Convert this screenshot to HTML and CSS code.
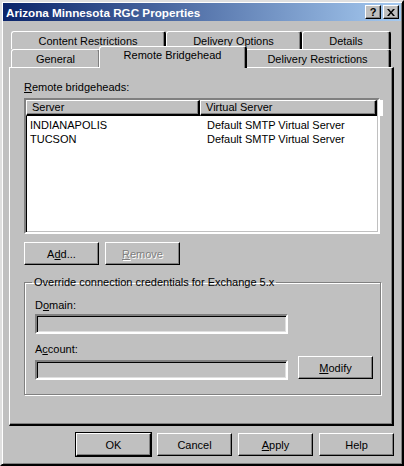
FILE: index.html
```html
<!DOCTYPE html>
<html lang="en">

<head>
    <meta charset="UTF-8">
    <title>Arizona Minnesota RGC Properties</title>
    <link rel="stylesheet" href="styles.css">
</head>

<body>
    <div class="window">
        <div class="titlebar">
            <span class="title">Arizona Minnesota RGC Properties</span>
            <div class="caption-btns">
                <button class="cap-btn help-btn">?</button>
                <button class="cap-btn close-btn">
                    <svg width="8" height="7" viewBox="0 0 8 7">
                        <path d="M0 0h2l2 2.5 2-2.5h2l-3 3.5 3 3.5h-2l-2-2.5-2 2.5h-2l3-3.5z" fill="#000" />
                    </svg>
                </button>
            </div>
        </div>

        <div class="tabs">
            <div class="tab-row top-row">
                <div class="tab w-content">Content Restrictions</div>
                <div class="tab w-options">Delivery Options</div>
                <div class="tab w-details">Details</div>
            </div>
            <div class="tab-row bottom-row">
                <div class="tab w-general">General</div>
                <div class="tab w-remote selected">Remote Bridgehead</div>
                <div class="tab w-restrict">Delivery Restrictions</div>
            </div>
        </div>

        <div class="panel">
            <div class="label"><u>R</u>emote bridgeheads:</div>
            <div class="listview">
                <div class="lv-header">
                    <div class="lv-col col-server">Server</div>
                    <div class="lv-col col-virtual">Virtual Server</div>
                    <div class="lv-col col-rest"></div>
                </div>
                <div class="lv-row">
                    <span class="cell-server">INDIANAPOLIS</span>
                    <span class="cell-virtual">Default SMTP Virtual Server</span>
                </div>
                <div class="lv-row">
                    <span class="cell-server">TUCSON</span>
                    <span class="cell-virtual">Default SMTP Virtual Server</span>
                </div>
            </div>

            <div class="btn-line">
                <button class="btn">A<u>d</u>d...</button>
                <button class="btn disabled"><u>R</u>emove</button>
            </div>

            <fieldset class="group">
                <legend>Override connection credentials for Exchange 5.x</legend>
                <div class="label domain-label">D<u>o</u>main:</div>
                <div class="field-line domain-line">
                    <div class="textbox"></div>
                </div>
                <div class="label account-label">A<u>c</u>count:</div>
                <div class="field-line account-line">
                    <div class="textbox"></div>
                    <button class="btn modify-btn"><u>M</u>odify</button>
                </div>
            </fieldset>
        </div>

        <div class="dialog-btns">
            <button class="btn default">OK</button>
            <button class="btn">Cancel</button>
            <button class="btn"><u>A</u>pply</button>
            <button class="btn">Help</button>
        </div>
    </div>
</body>

</html>
```

FILE: styles.css
```css
body {
    margin: 0;
    background: #c0c0c0;
    font-family: 'Liberation Sans', Arial, sans-serif;
    font-size: 11px;
    color: #000;
}

.window {
    width: 404px;
    height: 466px;
    box-sizing: border-box;
    padding: 1px;
    background: #c0c0c0;
    border-style: solid;
    border-width: 2px;
    border-color: #dfdfdf #000 #000 #dfdfdf;
    box-shadow: inset 1px 1px 0 #fff, inset -1px -1px 0 #808080;
}

/* Title bar */
.titlebar {
    height: 18px;
    display: flex;
    align-items: center;
    justify-content: space-between;
    background: linear-gradient(to right, #0a246a, #a6caf0);
    padding: 0 2px 0 3px;
}

.title {
    color: white;
    font-weight: bold;
    font-size: 11.7px;
}

.caption-btns {
    display: flex;
    gap: 2px;
}

.cap-btn {
    width: 16px;
    height: 14px;
    padding: 0;
    background: #c0c0c0;
    border: 1px solid;
    border-color: #fff #000 #000 #fff;
    box-shadow: inset -1px -1px 0 #808080;
    display: flex;
    align-items: center;
    justify-content: center;
    font-family: 'Liberation Sans', Arial, sans-serif;
    font-weight: bold;
    font-size: 11px;
    line-height: 1;
}

/* Tabs */
.tabs {
    margin: 10px 10px 0 8px;
}

.tab-row {
    display: flex;
    height: 18px;
}

.tab {
    box-sizing: border-box;
    height: 18px;
    border-style: solid;
    border-width: 1px 2px 0 1px;
    border-color: #fff #000 #c0c0c0 #fff;
    border-radius: 3px 3px 0 0;
    box-shadow: inset -1px 0 0 #808080;
    text-align: center;
    line-height: 17px;
    padding-top: 1px;
}

.w-content { width: 155px; }
.w-options { width: 136px; }
.w-details { width: 89px; }

.w-general { width: 90px; }
.w-remote { width: 144px; }
.w-restrict { width: 146px; }

.tab.selected {
    position: relative;
    z-index: 2;
    height: 22px;
    margin: -3px -2px -1px;
    width: 148px;
    background: #c0c0c0;
    padding-top: 0;
}

/* Panel */
.panel {
    margin: 0 7px 0 6px;
    height: 359px;
    box-sizing: border-box;
    border-style: solid;
    border-width: 1px 2px 2px 1px;
    border-color: #fff #000 #000 #fff;
    box-shadow: inset -1px -1px 0 #808080;
    padding: 13px 12px 0 14px;
}

.label {
    line-height: 13px;
}

.listview {
    margin-top: 4px;
    height: 136px;
    box-sizing: border-box;
    background: white;
    border: 2px solid;
    border-color: #808080 #fff #fff #808080;
    box-shadow: inset 1px 1px 0 #000, inset -1px -1px 0 #c0c0c0;
}

.lv-header {
    display: flex;
    height: 16px;
}

.lv-col {
    flex-shrink: 0;
    box-sizing: border-box;
    background: #c0c0c0;
    border-style: solid;
    border-width: 1px 2px 2px 1px;
    border-color: #fff #000 #000 #fff;
    box-shadow: inset -1px -1px 0 #808080;
    padding-left: 5px;
    line-height: 13px;
}

.col-server { width: 174px; }
.col-virtual { width: 177px; }
.col-rest {
    flex: 1;
    border: none;
    box-shadow: none;
    background: white;
    border-left: 1px solid #c0c0c0;
}

.lv-row {
    display: flex;
    height: 14px;
    line-height: 14px;
}

.lv-header + .lv-row {
    margin-top: 2px;
}

.cell-server {
    width: 177px;
    padding-left: 4px;
}

/* Buttons */
.btn {
    width: 75px;
    height: 23px;
    box-sizing: border-box;
    background: #c0c0c0;
    border: 1px solid;
    border-color: #fff #000 #000 #fff;
    box-shadow: inset -1px -1px 0 #808080;
    font-family: 'Liberation Sans', Arial, sans-serif;
    font-size: 11px;
    color: #000;
    padding: 0;
}

.btn.disabled {
    color: #808080;
    text-shadow: 1px 1px 0 #fff;
}

.btn-line {
    display: flex;
    gap: 6px;
    margin-top: 8px;
}

/* Group box */
.group {
    margin: 11px 0 0;
    border: 1px solid #808080;
    box-shadow: 1px 1px 0 #fff, inset 1px 1px 0 #fff;
    padding: 0 7px 14px 10px;
}

.group legend {
    padding: 0 2px;
    margin-left: -3px;
    line-height: 13px;
}

.domain-label {
    margin-top: 10px;
}

.account-label {
    margin-top: 9px;
}

.field-line {
    display: flex;
    align-items: flex-start;
    gap: 10px;
}

.domain-line {
    margin-top: 2px;
}

.account-line {
    margin-top: 4px;
    height: 20px;
}

.textbox {
    width: 253px;
    height: 20px;
    box-sizing: border-box;
    border: 2px solid;
    border-color: #808080 #fff #fff #808080;
    box-shadow: inset 1px 1px 0 #000, inset -1px -1px 0 #dfdfdf;
    background: #c0c0c0;
}

.modify-btn {
    margin-top: -4px;
}

/* Dialog buttons */
.dialog-btns {
    display: flex;
    justify-content: flex-end;
    gap: 6px;
    margin: 7px 7px 0 0;
}

.btn.default {
    outline: 1px solid #000;
}
```
